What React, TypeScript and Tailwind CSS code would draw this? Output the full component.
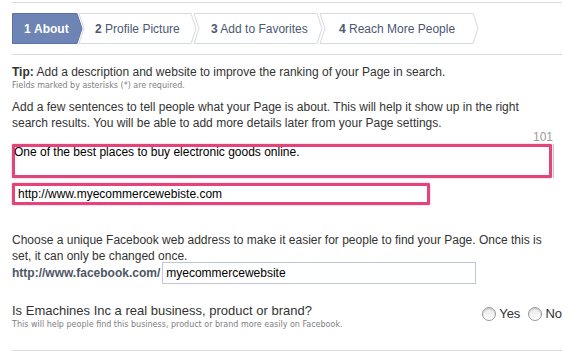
import React from "react";

const tabs = [
  { n: "1", label: "About", w: "w-[71px]", pl: "pl-[12px]", active: true },
  { n: "2", label: "Profile Picture", w: "w-[116px]", pl: "pl-[12px]", active: false },
  { n: "3", label: "Add to Favorites", w: "w-[128px]", pl: "pl-[12px]", active: false },
  { n: "4", label: "Reach More People", w: "w-[160px]", pl: "pl-[12px]", active: false },
];

function TabShapes() {
  // chevron outlines behind the step labels
  return (
    <svg className="absolute left-0 top-0" width="480" height="32" viewBox="12 12.5 480 32">
      <polygon points="12.5,13 77,13 82,28 77,43 12.5,43" fill="#6d84b4" stroke="#5a72a6" />
      <polygon points="79,13 191,13 196,28 191,43 79,43 84,28" fill="#fff" stroke="#d5d9e1" />
      <polygon points="194,13 317,13 322,28 317,43 194,43 199,28" fill="#fff" stroke="#d5d9e1" />
      <polygon points="320,13 473,13 478,28 473,43 320,43 325,28" fill="#fff" stroke="#d5d9e1" />
    </svg>
  );
}

function Radio({ label }: { label: string }) {
  return (
    <label className="flex items-center gap-[3px]">
      <span className="w-[14px] h-[14px] rounded-full border border-[#9a9a9a] bg-gradient-to-b from-[#e6e6e6] to-white shadow-[inset_0_1px_1px_rgba(0,0,0,0.15)]" />
      <span className="text-[13px] text-[#333]">{label}</span>
    </label>
  );
}

export default function App() {
  return (
    <div className="w-[577px] h-[353px] bg-white px-3 font-['Liberation_Sans',Arial,sans-serif] text-[#333] overflow-hidden">
      <div className="mt-[2px] border-t border-[#d9d9d9] w-[550px]" />

      <div className="relative mt-[10px] h-[31px]">
        <TabShapes />
        <div className="relative flex h-full items-center text-[12px]">
          {tabs.map((t) => (
            <div key={t.n} className={`${t.w} ${t.pl} shrink-0 ${t.active ? "text-white" : "text-[#4b5774]"}`}>
              <span className="font-bold">{t.n}</span>{" "}
              <span className={t.active ? "font-bold" : ""}>{t.label}</span>
            </div>
          ))}
        </div>
      </div>

      <div className="mt-[10px] border-t border-[#d9d9d9] w-[550px]" />

      <p className="mt-[9px] text-[12px] leading-[16px]">
        <span className="font-bold">Tip:</span> Add a description and website to improve the ranking of your Page in search.
      </p>
      <p className="font-['DejaVu_Sans',sans-serif] text-[8px] leading-[11px] text-[#808080]">
        Fields marked by asterisks (*) are required.
      </p>

      <p className="mt-[8px] text-[12px] leading-[16px] w-[535px]">
        Add a few sentences to tell people what your Page is about. This will help it show up in the right search results. You will be able to add more details later from your Page settings.
      </p>

      <div className="w-[541px] text-right text-[12px] leading-[13px] text-[#9a9a9a]">101</div>

      <div className="w-[542px] h-[34px] border-r border-[#c9c9c9]">
        <div className="w-[540px] h-[34px] border-[3px] border-[#e5437b] rounded-[1px] shadow-[0_0_2px_#f3a3bf] text-[12px] leading-[12px] text-black">
          <div className="-mt-[1px] -ml-[1px]">One of the best places to buy electronic goods online.</div>
        </div>
      </div>

      <div className="mt-[5px] w-[418px] h-[22px] border-[3px] border-[#e5437b] rounded-[1px] shadow-[0_0_2px_#f3a3bf] text-[12px] leading-[16px] text-black pl-[3px]">
        http://www.myecommercewebiste.com
      </div>

      <p className="mt-[27px] text-[12px] leading-[16px] w-[550px]">
        Choose a unique Facebook web address to make it easier for people to find your Page. Once this is set, it can only be changed once.
      </p>

      <div className="-mt-[2px] flex items-center">
        <span className="text-[12px] font-bold text-[#4e5665]">http://www.facebook.com/</span>
        <div className="ml-[2px] w-[314px] h-[22px] border border-[#bdc7d8] text-[12px] leading-[20px] text-black pl-[3px]">
          myecommercewebsite
        </div>
      </div>

      <div className="mt-[19px] flex items-start justify-between w-[550px]">
        <div>
          <p className="text-[13px] leading-[16px]">Is Emachines Inc a real business, product or brand?</p>
          <p className="font-['DejaVu_Sans',sans-serif] text-[8px] leading-[11px] text-[#808080]">
            This will help people find this business, product or brand more easily on Facebook.
          </p>
        </div>
        <div className="flex items-center gap-[8px] pt-[1px]">
          <Radio label="Yes" />
          <Radio label="No" />
        </div>
      </div>

      <div className="mt-[20px] border-t border-[#d9d9d9] w-[550px]" />
    </div>
  );
}
